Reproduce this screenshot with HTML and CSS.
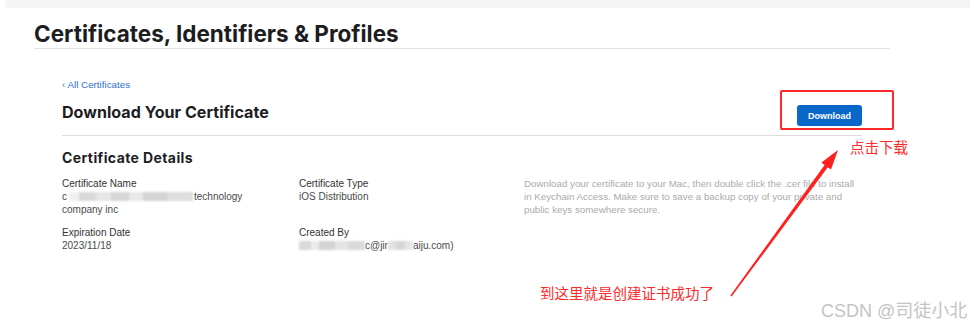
FILE: index.html
```html
<!DOCTYPE html>
<html lang="en">
<head>
<meta charset="utf-8">
<title>Certificates, Identifiers &amp; Profiles</title>
<link rel="stylesheet" href="styles.css">
</head>
<body>
<div class="topbar"></div>
<header class="page-header">
  <h1 class="page-title">Certificates, Identifiers &amp; Profiles</h1>
</header>
<main class="content">
  <a class="back-link" href="#">‹ All Certificates</a>
  <div class="title-row">
    <h2 class="section-title">Download Your Certificate</h2>
    <button class="btn-download" type="button">Download</button>
  </div>
  <h3 class="details-title">Certificate Details</h3>
  <div class="details-grid">
    <div class="field">
      <div class="label">Certificate Name</div>
      <div class="value">c<span class="redact redact-name"></span>technology company inc</div>
    </div>
    <div class="field">
      <div class="label">Certificate Type</div>
      <div class="value">iOS Distribution</div>
    </div>
    <p class="help">Download your certificate to your Mac, then double click the .cer file to install in Keychain Access. Make sure to save a backup copy of your private and public keys somewhere secure.</p>
    <div class="field">
      <div class="label">Expiration Date</div>
      <div class="value">2023/11/18</div>
    </div>
    <div class="field">
      <div class="label">Created By</div>
      <div class="value"><span class="redact redact-user"></span>c@jir<span class="redact redact-domain"></span>aiju.com)</div>
    </div>
  </div>
</main>

<div class="annotations">
  <div class="mark-box"></div>
  <svg class="mark-arrow" width="970" height="330" viewBox="0 0 970 330">
    <polygon fill="#ff2020" points="730.4,295.5 824.6,164.9 821.4,162.6 838,150 831,169.6 827.8,167.3 731.6,296.5"/>
  </svg>
  <div class="note note-download">点击下载</div>
  <div class="note note-success">到这里就是创建证书成功了</div>
  <div class="watermark">CSDN @司徒小北</div>
</div>
</body>
</html>
```
FILE: styles.css
```css
* { box-sizing: border-box; }
html, body { margin: 0; padding: 0; background: #fff; }
body {
  position: relative;
  width: 970px;
  height: 330px;
  overflow: hidden;
  font-family: "Liberation Sans", Arial, sans-serif;
  color: #333;
}
.topbar {
  height: 8px;
  margin-left: 5px;
  background: #f5f5f6;
}
.page-header {
  margin: 12px 0 0 34px;
  width: 856px;
  border-bottom: 1px solid #e2e2e2;
}
.page-title {
  margin: 0;
  font-family: Inter, "Liberation Sans", sans-serif;
  font-weight: 700;
  font-size: 22.5px;
  line-height: 28px;
  color: #1d1d1f;
}
.content {
  margin-left: 62px;
  width: 800px;
}
.back-link {
  display: block;
  margin-top: 30px;
  font-size: 9.8px;
  line-height: 12px;
  color: #2f6fce;
  text-decoration: none;
}
.title-row {
  display: flex;
  justify-content: space-between;
  align-items: flex-start;
  margin-top: 10px;
  padding-bottom: 9px;
  border-bottom: 1px solid #dcdcdc;
}
.section-title {
  margin: 0;
  font-family: Inter, "Liberation Sans", sans-serif;
  font-weight: 700;
  font-size: 16.1px;
  line-height: 22px;
  color: #1d1d1f;
}
.btn-download {
  margin-top: 4px;
  width: 65px;
  height: 21px;
  border: 0;
  border-radius: 3px;
  background: #0867c8;
  color: #fff;
  font-family: "Liberation Sans", Arial, sans-serif;
  font-size: 9px;
  font-weight: 700;
  padding: 0;
}
.details-title {
  margin: 13px 0 0;
  font-family: Inter, "Liberation Sans", sans-serif;
  font-weight: 700;
  font-size: 14px;
  letter-spacing: 0.4px;
  line-height: 18px;
  color: #1d1d1f;
}
.details-grid {
  display: grid;
  grid-template-columns: 237px 225px 1fr;
  grid-template-rows: auto auto;
  row-gap: 10px;
  margin-top: 10px;
}
.field { padding-right: 40px; }
.label {
  font-size: 10px;
  line-height: 13px;
  color: #333;
}
.value {
  font-size: 10px;
  line-height: 13px;
  color: #4a4a4a;
}
.redact {
  display: inline-block;
  height: 9px;
  vertical-align: -1px;
  filter: blur(0.8px);
}
.redact-name {
  width: 124px;
  margin-left: 2px;
  margin-right: 1px;
  background: linear-gradient(90deg, #f0f0f0 0 8%, #d9d9d9 8% 22%, #e6e6e6 22% 34%, #d6d6d6 34% 48%, #e9e9e9 48% 60%, #d4d4d4 60% 80%, #dedede 80% 100%);
}
.redact-user {
  width: 66px;
  background: linear-gradient(90deg, #d9d9d9 0 18%, #eaeaea 18% 30%, #d3d3d3 30% 55%, #e4e4e4 55% 75%, #dadada 75% 100%);
}
.redact-domain {
  width: 25px;
  background: linear-gradient(90deg, #e2e2e2 0 30%, #d6d6d6 30% 70%, #e6e6e6 70% 100%);
}
.help {
  grid-column: 3;
  grid-row: 1 / span 2;
  margin: 0;
  width: 336px;
  font-size: 9.75px;
  line-height: 13px;
  color: #ababab;
}
.annotations {
  position: absolute;
  inset: 0;
  pointer-events: none;
}
.mark-box {
  position: absolute;
  left: 780px;
  top: 90px;
  width: 114px;
  height: 40px;
  border: 2px solid #ff2727;
  border-radius: 2px;
}
.mark-arrow {
  position: absolute;
  left: 0;
  top: 0;
}
.note {
  position: absolute;
  color: #ff2a2a;
  font-family: "Noto Sans CJK SC", sans-serif;
  line-height: 1;
  white-space: nowrap;
}
.note-download {
  left: 850px;
  top: 140px;
  font-size: 14.5px;
}
.note-success {
  left: 540px;
  top: 286px;
  font-size: 14.5px;
}
.watermark {
  position: absolute;
  left: 821px;
  top: 302px;
  font-family: "Liberation Sans", "Noto Sans CJK SC", sans-serif;
  font-size: 18px;
  line-height: 1;
  color: #c4c4c4;
  white-space: nowrap;
}
```
